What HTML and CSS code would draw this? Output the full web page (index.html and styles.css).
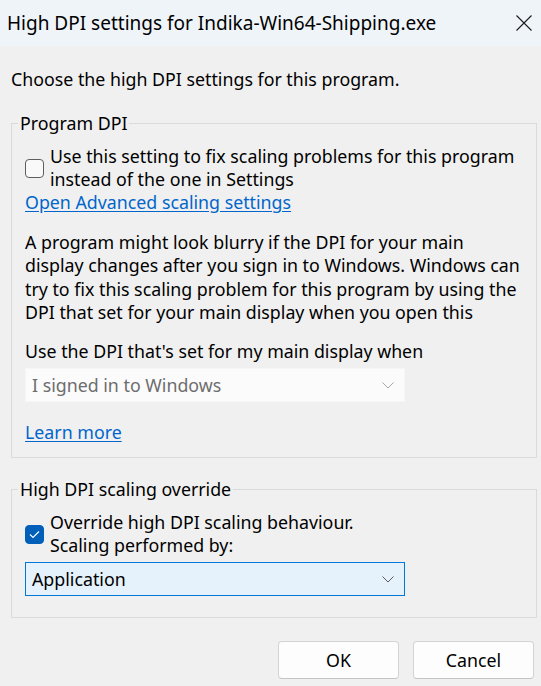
FILE: index.html
```html
<!DOCTYPE html>
<html lang="en">
<head>
<meta charset="utf-8">
<title>High DPI settings</title>
<link rel="stylesheet" href="styles.css">
</head>
<body>
<div class="dialog">
  <div class="titlebar">
    <span class="title">High DPI settings for Indika-Win64-Shipping.exe</span>
    <svg class="close" width="16" height="16" viewBox="0 0 16 16"><path d="M0.5 0.5 L15.5 15.5 M15.5 0.5 L0.5 15.5" stroke="#1a1a1a" stroke-width="1.1" fill="none"/></svg>
  </div>
  <div class="content">
    <div class="intro">Choose the high DPI settings for this program.</div>

    <fieldset class="group group-dpi">
      <legend>Program DPI</legend>
      <div class="group-body">
        <label class="check-row">
          <span class="box"></span>
          <span class="check-text">Use this setting to fix scaling problems for this program<br>instead of the one in Settings</span>
        </label>
        <a class="link" href="#">Open Advanced scaling settings</a>
        <p class="para">A program might look blurry if the DPI for your main<br>display changes after you sign in to Windows. Windows can<br>try to fix this scaling problem for this program by using the<br>DPI that set for your main display when you open this</p>
        <div class="label">Use the DPI that's set for my main display when</div>
        <div class="select disabled">
          <span>I signed in to Windows</span>
          <svg width="12" height="7" viewBox="0 0 12 7"><path d="M0.5 0.5 L6 6 L11.5 0.5" stroke="#a8a8a8" stroke-width="1" fill="none"/></svg>
        </div>
        <a class="link learn" href="#">Learn more</a>
      </div>
    </fieldset>

    <fieldset class="group group-override">
      <legend>High DPI scaling override</legend>
      <div class="group-body">
        <label class="check-row">
          <span class="box checked"><svg width="11" height="9" viewBox="0 0 11 9"><path d="M1 4.5 L4 7.5 L10 1.5" stroke="#ffffff" stroke-width="1.1" fill="none"/></svg></span>
          <span class="check-text">Override high DPI scaling behaviour.<br>Scaling performed by:</span>
        </label>
        <div class="select active">
          <span>Application</span>
          <svg width="12" height="7" viewBox="0 0 12 7"><path d="M0.5 0.5 L6 6 L11.5 0.5" stroke="#5a5a5a" stroke-width="1" fill="none"/></svg>
        </div>
      </div>
    </fieldset>

    <div class="buttons">
      <button class="btn">OK</button>
      <button class="btn">Cancel</button>
    </div>
  </div>
</div>
</body>
</html>
```
FILE: styles.css
```css
html, body {
  margin: 0;
  padding: 0;
}
body {
  background: #f0f0f0;
  font-family: "Noto Sans", "Open Sans", sans-serif;
  font-size: 17.8px;
  line-height: 23px;
  color: #000;
  width: 541px;
  height: 686px;
  overflow: hidden;
}
.titlebar {
  height: 46px;
  background: #eff4f9;
  display: flex;
  align-items: center;
  justify-content: space-between;
  padding: 0 9px 0 7px;
  box-sizing: border-box;
}
.title {
  font-size: 19px;
  white-space: nowrap;
}
.close {
  display: block;
}
.content {
  padding: 22px 5px 0 11px;
}
.intro {
  white-space: nowrap;
}
.group {
  margin: 21px 0 0 0;
  padding: 0;
  width: 526px;
  box-sizing: border-box;
  border: 1px solid #dadada;
  min-width: 0;
}
.group legend {
  margin-left: 6px;
  padding: 0 2px;
  line-height: 23px;
}
.group-override {
  margin-top: 20px;
}
.group-body {
  padding: 10px 13px 13px 13px;
}
.group-override .group-body {
  padding-top: 10px;
  padding-bottom: 21px;
}
.check-row {
  display: flex;
  align-items: center;
  gap: 6px;
}
.check-text {
  white-space: nowrap;
}
.box {
  width: 19px;
  height: 19px;
  box-sizing: border-box;
  border: 1px solid #5e5e5e;
  border-radius: 4px;
  background: #f9f9f9;
  flex: none;
  display: flex;
  align-items: center;
  justify-content: center;
}
.box.checked {
  background: #005fb8;
  border-color: #005fb8;
}
.link {
  display: block;
  color: #0066cc;
  text-decoration: underline;
  text-underline-offset: 2px;
  width: max-content;
}
.para {
  margin: 17px 0 0 0;
  white-space: nowrap;
  line-height: 23.3px;
}
.label {
  margin-top: 16px;
}
.select {
  margin-top: 5px;
  width: 380px;
  height: 34px;
  box-sizing: border-box;
  display: flex;
  align-items: center;
  justify-content: space-between;
  padding: 0 10px 0 6px;
}
.select svg {
  display: block;
}
.select.disabled {
  background: #fbfbfb;
  border: 1px solid #f6f6f6;
  color: #6d6d6d;
}
.select.active {
  background: #e5f1fb;
  border: 1px solid #0078d7;
}
.learn {
  margin-top: 19px;
}
.buttons {
  display: flex;
  justify-content: flex-end;
  gap: 14px;
  margin-top: 23px;
  padding-right: 2px;
}
.btn {
  width: 121px;
  height: 38px;
  font-family: inherit;
  font-size: 17.8px;
  color: #000;
  background: #fdfdfd;
  border: 1px solid #d3d3d3;
  border-bottom-color: #c4c4c4;
  border-radius: 4px;
  padding: 0;
}
```
